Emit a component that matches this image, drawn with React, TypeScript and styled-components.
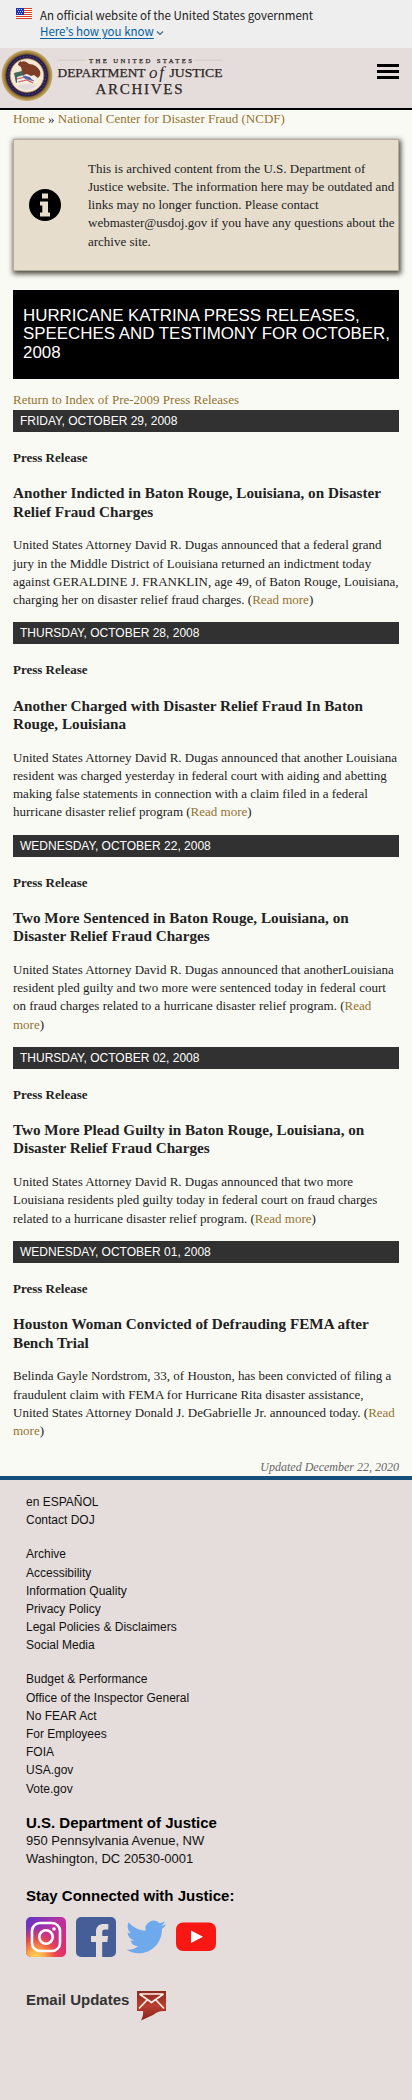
import React from 'react';
import styled, { createGlobalStyle } from 'styled-components';

const Global = createGlobalStyle`
  * { box-sizing: border-box; }
  body { margin: 0; background: #e5dddb; }
  h1, h2, h3, h4, p, ul { margin: 0; padding: 0; }
`;

const sans = '"Liberation Sans", Arial, sans-serif';

const Page = styled.div`
  width: 412px;
  min-height: 2100px;
  background: #e5dddb;
  font: 13px/18.2px "Liberation Serif", "Times New Roman", serif;
  color: #222;
`;

const Banner = styled.div`
  height: 48px;
  background: #eee;
  padding: 8px 16px 0;
  display: flex;
  gap: 8px;
  font: 11.52px/16px "Noto Sans CJK JP", sans-serif;
  color: #1b1b1b;
`;

const BannerText = styled.div`
  margin-top: -1px;
`;

const BannerLink = styled.a`
  color: #005ea2;
  text-decoration: underline;
  text-underline-offset: 2px;
`;

const Chevron = styled.svg`
  margin-left: 2px;
`;

const Header = styled.header`
  height: 62px;
  border-bottom: 2px solid #000;
  display: flex;
  justify-content: space-between;
  background: #e5dddb;
`;

const MenuButton = styled.div`
  width: 22px;
  height: 15px;
  margin: 16px 13px 0 0;
  border: solid #000;
  border-width: 3px 0;
  display: flex;
  align-items: center;
  &::before { content: ''; width: 100%; height: 3px; background: #000; }
`;

const Main = styled.main`
  background: #fafaf5;
  height: 1366px;
  padding: 0 13px;
  display: flex;
  flex-direction: column;
`;

const Link = styled.a`
  color: #94722e;
`;

const IndexLine = styled.div`
  margin-bottom: 0.9px;
`;

const Notice = styled.aside`
  margin-top: 11px;
  height: 132px;
  flex: none;
  background: #e6ddcd;
  border: 1px solid #b4ac97;
  box-shadow: 1px 2px 5px 1px #4c4c40;
  display: flex;
  align-items: center;
  padding-left: 15px;
  gap: 27px;
`;

const NoticeText = styled.p`
  white-space: pre;
`;

const Title = styled.h1`
  margin: 19px 0 11.8px;
  height: 89px;
  flex: none;
  background: #000;
  color: #fff;
  padding: 16.5px 0 0 10px;
  font: 16.9px/18.6px ${sans};
  text-transform: uppercase;
`;

const DateBar = styled.h2`
  height: 22px;
  background: #313131;
  color: #fff;
  padding-left: 7px;
  font: 12px/22px ${sans};
  text-transform: uppercase;
`;

const Item = styled.section`
  margin-bottom: 13.2px;
`;

const Kind = styled.h4`
  margin: 17.1px 0 17px;
  font-size: 13px;
`;

const Headline = styled.h3`
  font-size: 15.2px;
  line-height: 18.2px;
  margin-bottom: 15.6px;
`;

const Updated = styled.p`
  margin-top: 5px;
  text-align: right;
  font-style: italic;
  font-size: 12px;
  color: #666;
`;

const Footer = styled.footer`
  border-top: 4px solid #15507a;
  padding: 13px 26px 0;
  font: 12px/18.2px ${sans};
  color: #111;
`;

const Links = styled.ul`
  list-style: none;
  margin-bottom: 15.9px;
`;

const FootTitle = styled.h3<{ $soft?: boolean }>`
  font-size: 15px;
  line-height: 18.2px;
  color: ${(p) => (p.$soft ? '#333' : '#000')};
`;

const Address = styled.p`
  font-size: 13px;
  line-height: 18.2px;
  margin-bottom: 19px;
`;

const Social = styled.div`
  display: flex;
  gap: 10px;
  margin: 11.3px 0 34px;
`;

const Email = styled.div`
  display: flex;
  gap: 8px;
`;

const Flag = () => (
  <svg width="16" height="11" viewBox="0 0 16 11">
    <rect width="16" height="11" fill="#fff" />
    {[0, 2, 4, 6, 8, 10].map((y) => (
      <rect key={y} y={y} width="16" height="1" fill="#db3e1f" />
    ))}
    <rect width="8" height="7" fill="#1e33b1" />
    {[1, 3, 5].map((y) => [1, 3, 5].map((x) => (
      <rect key={`${x}-${y}`} x={x + (y === 3 ? 1 : 0)} y={y} width="1" height="1" fill="#bcc6f0" />
    )))}
  </svg>
);

const Logo = () => (
  <svg width="230" height="60" viewBox="0 0 230 60">
    <defs>
      <radialGradient id="seal">
        <stop offset="0.8" stopColor="#5c4428" />
        <stop offset="0.92" stopColor="#b08f45" />
        <stop offset="1" stopColor="#c4ab74" />
      </radialGradient>
    </defs>
    <circle cx="27" cy="27.5" r="25.5" fill="url(#seal)" />
    <circle cx="27" cy="27.5" r="21" fill="#2a1e4e" />
    <circle cx="27" cy="27.5" r="19" fill="none" stroke="#6d5f80" strokeWidth="1" strokeDasharray="1 2.4" />
    <circle cx="27" cy="27.5" r="16.8" fill="#f3e9d4" stroke="#b79258" strokeWidth="0.8" />
    <path d="M21 14c3-2 6 0 8 2 5 0 9 3 11 7 1 3 0 5-2 7l-4-3-6 2-7-2c1-3 1-5 0-8l-3-2c0-2 1-3 3-4z" fill="#7d3f28" />
    <path d="M14 25l8-2 2 8-8 4z" fill="#41685a" />
    <path d="M17 29l10-3 8 4 3 5-9-1-12 2z" fill="#f4efee" />
    <path d="M17 31l9-2 8 4M18 34l9-2 6 3" stroke="#d06560" strokeWidth="1.2" fill="none" />
    <path d="M22 27l8 2 3 4-8-2z" fill="#5a65a8" />
    <path d="M17 38c6-2 14-2 20-1-4 5-14 7-20 1z" fill="#e1dbdc" />
    <path d="M58 12.2h27M195 12.2h27" stroke="#cfc6c4" strokeWidth="0.8" />
    <g fill="#2c2726" fontFamily='"Liberation Serif", serif' stroke="#2c2726" strokeWidth="0.25">
      <text x="89" y="14.8" fontSize="6.7" textLength="103">THE UNITED STATES</text>
      <text x="57.5" y="28.5" fontSize="11.7" textLength="88" lengthAdjust="spacingAndGlyphs">DEPARTMENT</text>
      <text x="149" y="29.5" fontSize="17" fontStyle="italic" strokeWidth="0" textLength="15">of</text>
      <text x="169.5" y="28.5" fontSize="11.7" textLength="53" lengthAdjust="spacingAndGlyphs">JUSTICE</text>
      <text x="95.5" y="45.8" fontSize="15" textLength="87">ARCHIVES</text>
    </g>
  </svg>
);

const InfoIcon = () => (
  <svg width="32" height="32" viewBox="0 0 32 32">
    <circle cx="16" cy="16" r="16" fill="#000" />
    <path d="M13 4.5h6v5h-6zM11 12.5h8v11h2v4H11v-4h2.3v-7H11z" fill="#e6ddcd" />
  </svg>
);

const Instagram = () => (
  <svg width="40" height="40" viewBox="0 0 40 40">
    <defs>
      <linearGradient id="igA" x1="0" y1="0" x2="1" y2="0.9">
        <stop stopColor="#5a35c8" /><stop offset="0.5" stopColor="#b832a0" /><stop offset="1" stopColor="#e52a6c" />
      </linearGradient>
      <radialGradient id="igB" cx="0.25" cy="1.03" r="0.8">
        <stop stopColor="#ffd75a" /><stop offset="0.25" stopColor="#fbb04b" /><stop offset="0.6" stopColor="#f0503d" stopOpacity="0.85" /><stop offset="1" stopColor="#d8307a" stopOpacity="0" />
      </radialGradient>
    </defs>
    <rect width="40" height="40" rx="5" fill="url(#igA)" />
    <rect width="40" height="40" rx="5" fill="url(#igB)" />
    <g fill="none" stroke="#fff" strokeWidth="2.6">
      <rect x="6" y="6" width="28" height="28" rx="8" />
      <circle cx="20" cy="20" r="6.7" />
    </g>
    <circle cx="28" cy="12" r="1.8" fill="#fff" />
  </svg>
);

const Facebook = () => (
  <svg width="40" height="40" viewBox="0 0 40 40">
    <rect width="40" height="40" rx="5" fill="#465e98" />
    <path d="M20 40V25h-5v-6h5v-4.500c0-5 3-7.500 7.700-7.500h4.600v5.500h-3c-2.600 0-3.100 1.200-3.100 3V19h5.900l-.8 6h-5.100v15z" fill="#e5dddb" />
  </svg>
);

const Twitter = () => (
  <svg width="40" height="40" viewBox="0 0 24 24">
    <path fill="#6ea9ec" d="M23.95 4.57a10 10 0 01-2.820.770 4.960 4.960 0 002.160-2.720c-.95.550-2 .950-3.130 1.180a4.920 4.920 0 00-8.380 4.480C7.690 8.090 4.070 6.130 1.640 3.160a4.820 4.820 0 00-.670 2.480c0 1.710.870 3.210 2.190 4.100a4.900 4.900 0 01-2.230-.620v.060a4.920 4.920 0 003.950 4.830 5 5 0 01-2.210.080 4.940 4.940 0 004.600 3.420A9.870 9.870 0 010 19.540a13.990 13.990 0 007.550 2.210c9.050 0 14-7.500 14-13.980 0-.210 0-.420-.020-.630a9.940 9.940 0 002.460-2.550z" />
  </svg>
);

const YouTube = () => (
  <svg width="40" height="40" viewBox="0 0 40 40">
    <rect y="5.500" width="40" height="28.500" rx="7" fill="#f91714" />
    <path d="M15 13.500l12 6.200-12 6.200z" fill="#fff" />
  </svg>
);

const EmailIcon = () => (
  <svg width="29" height="30" viewBox="0 0 29 30">
    <defs>
      <linearGradient id="mail" x1="0" y1="0" x2="0" y2="1">
        <stop stopColor="#8c2a20" /><stop offset="0.5" stopColor="#b93f30" /><stop offset="1" stopColor="#861f1c" />
      </linearGradient>
    </defs>
    <path d="M0 0h29v20c-6-.5-9 1-13 4l-12 5.500c1.500-3 2.500-6 2-9.500H0z" fill="url(#mail)" />
    <path d="M2.500 3h24M2.500 3l12 8.500L26.500 3M2 17.500l8-8.500M27 17.500L19 9" fill="none" stroke="#fff2ec" strokeWidth="1.700" />
  </svg>
);

const releases = [
  { date: 'Friday, October 29, 2008', title: 'Another Indicted in Baton Rouge, Louisiana, on Disaster Relief Fraud Charges', body: 'United States Attorney David R. Dugas announced that a federal grand jury in the Middle District of Louisiana returned an indictment today against GERALDINE J. FRANKLIN, age 49, of Baton Rouge, Louisiana, charging her on disaster relief fraud charges. (' },
  { date: 'Thursday, October 28, 2008', title: 'Another Charged with Disaster Relief Fraud In Baton Rouge, Louisiana', body: 'United States Attorney David R. Dugas announced that another Louisiana resident was charged yesterday in federal court with aiding and abetting making false statements in connection with a claim filed in a federal hurricane disaster relief program (' },
  { date: 'Wednesday, October 22, 2008', title: 'Two More Sentenced in Baton Rouge, Louisiana, on Disaster Relief Fraud Charges', body: 'United States Attorney David R. Dugas announced that anotherLouisiana resident pled guilty and two more were sentenced today in federal court on fraud charges related to a hurricane disaster relief program. (' },
  { date: 'Thursday, October 02, 2008', title: 'Two More Plead Guilty in Baton Rouge, Louisiana, on Disaster Relief Fraud Charges', body: 'United States Attorney David R. Dugas announced that two more Louisiana residents pled guilty today in federal court on fraud charges related to a hurricane disaster relief program. (' },
  { date: 'Wednesday, October 01, 2008', title: 'Houston Woman Convicted of Defrauding FEMA after Bench Trial', body: 'Belinda Gayle Nordstrom, 33, of Houston, has been convicted of filing a fraudulent claim with FEMA for Hurricane Rita disaster assistance, United States Attorney Donald J. DeGabrielle Jr. announced today. (' },
];

const footerLinks = [
  ['en ESPAÑOL', 'Contact DOJ'],
  ['Archive', 'Accessibility', 'Information Quality', 'Privacy Policy', 'Legal Policies & Disclaimers', 'Social Media'],
  ['Budget & Performance', 'Office of the Inspector General', 'No FEAR Act', 'For Employees', 'FOIA', 'USA.gov', 'Vote.gov'],
];

const notice = `This is archived content from the U.S. Department of
Justice website. The information here may be outdated and
links may no longer function. Please contact
webmaster@usdoj.gov if you have any questions about the
archive site.`;

export default function App() {
  return (
    <Page>
      <Global />
      <Banner>
        <Flag />
        <BannerText>
          <div>An official website of the United States government</div>
          <BannerLink>Here’s how you know</BannerLink>
          <Chevron width="8" height="6" viewBox="0 0 8 6">
            <path d="M1 1.500l3 3 3-3" fill="none" stroke="#45657c" strokeWidth="1.200" />
          </Chevron>
        </BannerText>
      </Banner>
      <Header>
        <Logo />
        <MenuButton />
      </Header>
      <Main>
        <div><Link>Home</Link> » <Link>National Center for Disaster Fraud (NCDF)</Link></div>
        <Notice>
          <InfoIcon />
          <NoticeText>{notice}</NoticeText>
        </Notice>
        <Title>Hurricane Katrina Press Releases, Speeches and Testimony for October, 2008</Title>
        <IndexLine><Link>Return to Index of Pre-2009 Press Releases</Link></IndexLine>
        {releases.map((r) => (
          <Item key={r.date}>
            <DateBar>{r.date}</DateBar>
            <Kind>Press Release</Kind>
            <Headline>{r.title}</Headline>
            <p>{r.body}<Link>Read more</Link>)</p>
          </Item>
        ))}
        <Updated>Updated December 22, 2020</Updated>
      </Main>
      <Footer>
        {footerLinks.map((group) => (
          <Links key={group[0]}>
            {group.map((l) => <li key={l}>{l}</li>)}
          </Links>
        ))}
        <FootTitle>U.S. Department of Justice</FootTitle>
        <Address>950 Pennsylvania Avenue, NW<br />Washington, DC 20530-0001</Address>
        <FootTitle>Stay Connected with Justice:</FootTitle>
        <Social>
          <Instagram />
          <Facebook />
          <Twitter />
          <YouTube />
        </Social>
        <Email>
          <FootTitle $soft>Email Updates</FootTitle>
          <EmailIcon />
        </Email>
      </Footer>
    </Page>
  );
}
